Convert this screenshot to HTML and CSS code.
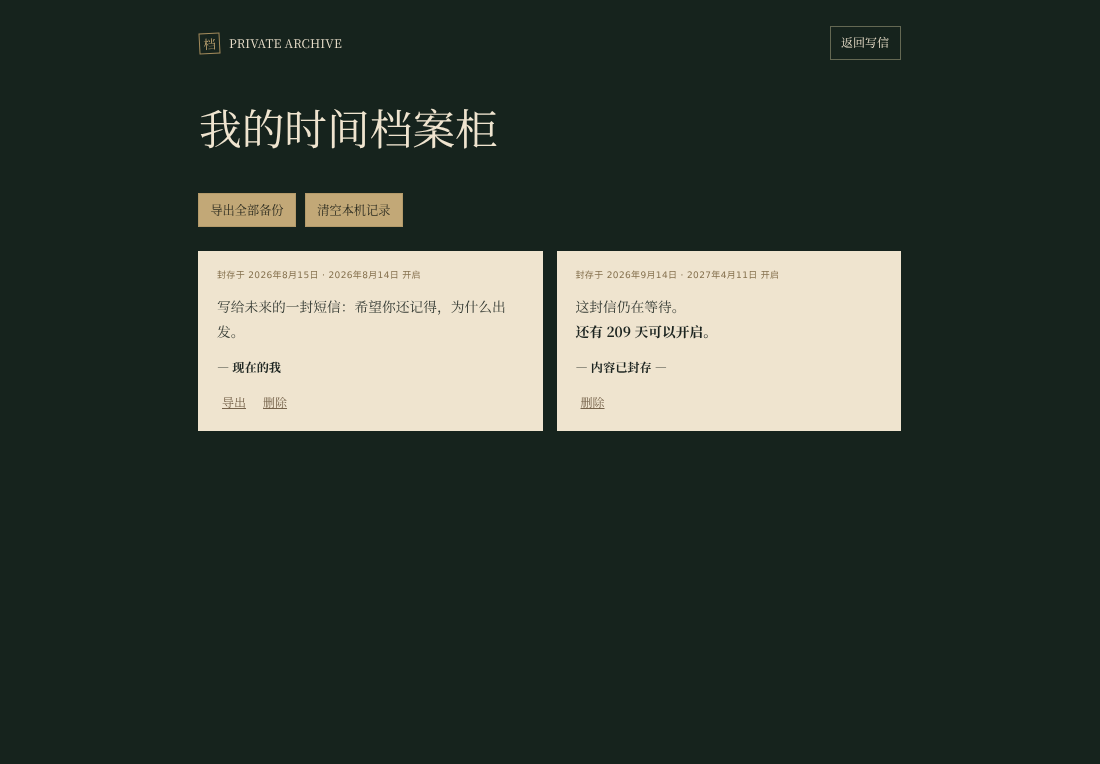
FILE: index.html
```html
<!DOCTYPE html>
<html lang="zh-CN">

<head>
    <meta charset="UTF-8">
    <meta name="viewport" content="width=device-width, initial-scale=1.0">
    <title>我的时间档案柜</title>
    <link rel="stylesheet" href="styles.css">
</head>

<body>
    <div class="container">
        <header class="topbar">
            <div class="brand">
                <span class="stamp">档</span>
                <span class="brand-name">PRIVATE ARCHIVE</span>
            </div>
            <a class="back-link" href="#">返回写信</a>
        </header>

        <h1>我的时间档案柜</h1>

        <div class="toolbar">
            <button class="tool-btn">导出全部备份</button>
            <button class="tool-btn">清空本机记录</button>
        </div>

        <div class="letters">
            <div class="letter">
                <p class="meta">封存于 2026年8月15日 · 2026年8月14日 开启</p>
                <p class="body">写给未来的一封短信&#xFF1A;希望你还记得&#xFF0C;为什么出发。</p>
                <p class="sign">— <strong>现在的我</strong></p>
                <div class="actions">
                    <a href="#">导出</a>
                    <a href="#">删除</a>
                </div>
            </div>
            <div class="letter">
                <p class="meta">封存于 2026年9月14日 · 2027年4月11日 开启</p>
                <p class="body">这封信仍在等待。<br><strong>还有 209 天可以开启。</strong></p>
                <p class="sign">— <strong>内容已封存</strong> —</p>
                <div class="actions">
                    <a href="#">删除</a>
                </div>
            </div>
        </div>
    </div>
</body>

</html>
```

FILE: styles.css
```css
/* styles.css */
body {
    font-family: "Noto Serif CJK SC", "Noto Sans CJK SC", serif;
    background-color: #16231d;
    color: #efe4cf;
    margin: 0;
    padding: 0;
    text-rendering: geometricPrecision;
}

.container {
    width: 703px;
    margin-left: 198.4px;
    padding-top: 26px;
    will-change: transform;
}

.topbar {
    display: flex;
    justify-content: space-between;
    align-items: center;
}

.brand {
    display: flex;
    align-items: center;
    gap: 9px;
    padding-left: 1px;
}

.stamp {
    display: flex;
    justify-content: center;
    align-items: center;
    width: 19px;
    height: 19px;
    border: 1px solid #a58c5c;
    color: #c5a874;
    font-size: 12.5px;
    transform: rotate(-3deg);
}

.brand-name {
    font-size: 12px;
    color: #efe4cf;
    letter-spacing: 0.1px;
}

.back-link {
    display: block;
    padding: 8px 11px 8px 10px;
    border: 1px solid #646853;
    color: #efe4cf;
    font-size: 12px;
    line-height: 16px;
    text-decoration: none;
}

h1 {
    margin: 39px 0 0;
    padding-left: 1px;
    font-size: 42.7px;
    font-weight: 400;
    line-height: 58px;
    color: #efe4cf;
}

.toolbar {
    display: flex;
    gap: 9px;
    margin-top: 36px;
}

.tool-btn {
    padding: 8px 11.4px;
    background-color: #c2a877;
    border: 1px solid #b39a6a;
    border-radius: 0;
    color: #2a2a1f;
    font-family: inherit;
    font-size: 12.2px;
    line-height: 16px;
}

.letters {
    display: grid;
    grid-template-columns: 1fr 1fr;
    gap: 14px;
    margin-top: 24px;
}

.letter {
    padding: 19px 19px 18px;
    background-color: #efe4cf;
    color: #1c2420;
}

.meta {
    margin: 0;
    font-family: "DejaVu Sans", "Noto Sans CJK SC", sans-serif;
    font-size: 9px;
    letter-spacing: 0.35px;
    line-height: 13px;
    color: #86724f;
}

.body {
    margin: 11px 0 0;
    font-size: 13.76px;
    line-height: 25px;
    color: #343a33;
}

.body strong {
    color: #1c2420;
}

.sign {
    margin: 14px 0 0;
    font-size: 12.2px;
    line-height: 20px;
    color: #343a33;
}

.sign strong {
    color: #1c2420;
}

.actions {
    display: flex;
    gap: 17px;
    margin-top: 15px;
    padding-left: 5px;
}

.actions a {
    font-size: 12px;
    line-height: 20px;
    color: #75624a;
}
```
